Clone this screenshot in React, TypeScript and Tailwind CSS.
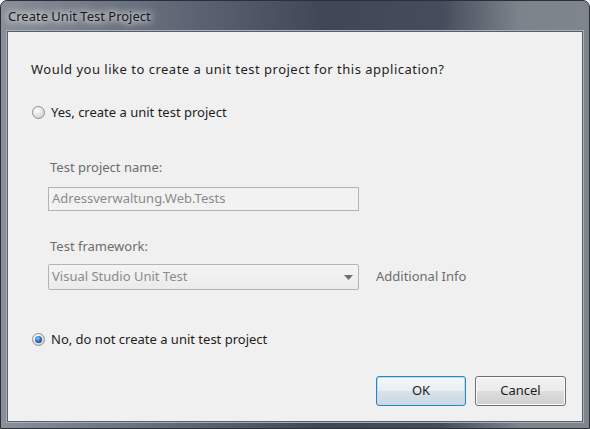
import React from "react";

function Radio({ checked }: { checked?: boolean }) {
	return (
		<span className="relative inline-flex h-[13px] w-[13px] shrink-0 items-center justify-center rounded-full border border-[#8e8f8f] bg-[radial-gradient(circle_at_35%_30%,#ffffff,#dcdcdc_60%,#c4c4c4)]">
			{checked && (
				<span className="h-[7px] w-[7px] rounded-full bg-[radial-gradient(circle_at_40%_35%,#8cc8f5,#1f66b8_55%,#0a2f6e)]" />
			)}
		</span>
	);
}

export default function App() {
	const font = { fontFamily: '"Noto Sans", "Open Sans", Arial, sans-serif' };
	return (
		<div
			className="relative h-[429px] w-[590px] overflow-hidden rounded-t-[7px] border border-[#2b2f38] bg-[linear-gradient(90deg,#8a9099_0%,#6d7482_20%,#3f4757_55%,#454d5c_75%,#7d838b_88%,#7f858d_100%)]"
			style={font}
		>
			<div className="flex h-[30px] items-center pl-[7px] pt-[2px]">
				<span className="text-[13px] text-[#1a1a1a] [text-shadow:0_0_6px_#fff,0_0_10px_#fff]">
					Create Unit Test Project
				</span>
			</div>
			<div className="mx-[6px] h-[391px] border border-[#565e6a] p-0 shadow-[0_0_0_1px_#aab0b8]">
				<div className="flex h-full flex-col bg-[#f0f0f0] text-[13px] text-[#1e1e1e]">
					<div className="pl-[23px] pt-[28px] tracking-[0.5px]">
						Would you like to create a unit test project for this application?
					</div>
					<label className="mt-[23px] flex items-center gap-[6px] pl-[24px]">
						<Radio />
						<span>Yes, create a unit test project</span>
					</label>
					<div className="pl-[42px] pt-[36px] text-[#6d6d6d]">Test project name:</div>
					<div className="ml-[40px] mt-[9px] flex h-[24px] w-[311px] items-center border border-[#b4b4b4] bg-[#f2f2f2] px-[3px] text-[#8b8b8b]">
						Adressverwaltung.Web.Tests
					</div>
					<div className="pl-[42px] pt-[26px] text-[#6d6d6d]">Test framework:</div>
					<div className="mt-[8px] flex items-center">
						<div className="ml-[40px] flex h-[26px] w-[311px] items-center justify-between rounded-[2px] border border-[#b4b4b4] bg-[linear-gradient(#f4f4f4,#ebebeb)] pl-[3px] pr-[5px] text-[#8b8b8b]">
							<span>Visual Studio Unit Test</span>
							<svg width="9" height="5" viewBox="0 0 9 5">
								<path d="M0 0h9L4.5 5z" fill="#707070" />
							</svg>
						</div>
						<span className="ml-[17px] text-[#6d6d6d]">Additional Info</span>
					</div>
					<label className="mt-[40px] flex items-center gap-[6px] pl-[24px]">
						<Radio checked />
						<span>No, do not create a unit test project</span>
					</label>
					<div className="mt-auto flex justify-end gap-[9px] pb-[15px] pr-[16px]">
						<button className="h-[30px] w-[90px] rounded-[3px] border border-[#3c7fb1] bg-[linear-gradient(#f4f8fb_0%,#e8eef3_48%,#d7e2ea_52%,#cbd8e2_100%)] text-[13px] text-[#1e1e1e] shadow-[inset_0_0_0_1px_#a9e3f8]">
							OK
						</button>
						<button className="h-[30px] w-[91px] rounded-[3px] border border-[#707070] bg-[linear-gradient(#f2f2f2_0%,#ebebeb_48%,#dddddd_52%,#cfcfcf_100%)] text-[13px] text-[#1e1e1e] shadow-[inset_0_0_0_1px_#fcfcfc]">
							Cancel
						</button>
					</div>
				</div>
			</div>
		</div>
	);
}
